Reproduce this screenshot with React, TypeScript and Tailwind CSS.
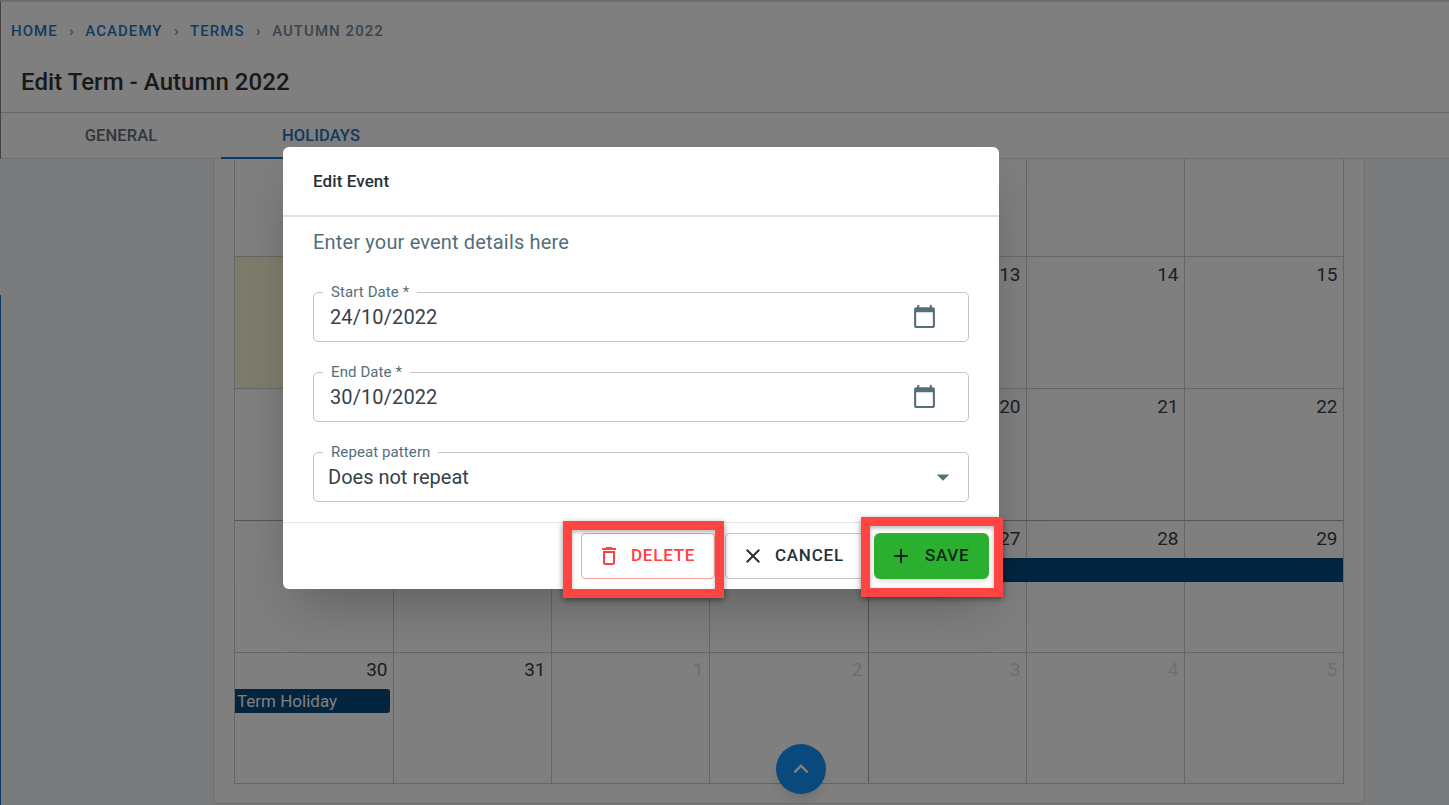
import React from 'react';

type Cell = { day: number; muted?: boolean; tint?: boolean; bar?: 'mid' | 'label'; strong?: boolean };

// days hidden behind the dialog are left out
const weeks: Cell[][] = [
  [{ day: 0 }, { day: 0 }, { day: 0 }, { day: 0 }, { day: 0, strong: true }, { day: 0 }, { day: 0 }],
  [{ day: 0, tint: true }, { day: 0 }, { day: 0 }, { day: 0 }, { day: 13, strong: true }, { day: 14 }, { day: 15 }],
  [{ day: 0 }, { day: 0 }, { day: 0 }, { day: 0 }, { day: 20, strong: true }, { day: 21 }, { day: 22 }],
  [{ day: 0 }, { day: 0 }, { day: 0 }, { day: 0 }, { day: 27, bar: 'mid', strong: true }, { day: 28, bar: 'mid' }, { day: 29, bar: 'mid' }],
  [
    { day: 30, bar: 'label' },
    { day: 31 },
    { day: 1, muted: true },
    { day: 2, muted: true },
    { day: 3, muted: true, strong: true },
    { day: 4, muted: true },
    { day: 5, muted: true },
  ],
];

const rowHeights = ['h-[98px]', 'h-[132px]', 'h-[132px]', 'h-[132px]', 'h-[130px]'];

const Crumb = ({ children, last }: { children: React.ReactNode; last?: boolean }) => (
  <span className={last ? 'text-[#74899c]' : 'text-[#2a74bd]'}>{children}</span>
);

const Sep = () => <span className="mx-[11.5px] text-[#6f7f8f] font-normal tracking-normal">›</span>;

const CalendarIcon = () => (
  <svg viewBox="0 0 24 24" className="w-[25px] h-[25px] fill-[#546e7a]">
    <path d="M20 3h-1V1h-2v2H7V1H5v2H4c-1.1 0-2 .9-2 2v16c0 1.1.9 2 2 2h16c1.1 0 2-.9 2-2V5c0-1.1-.9-2-2-2zm0 18H4V8h16v13z" />
  </svg>
);

const Field = ({ label, value, select }: { label: string; value: string; select?: boolean }) => (
  <div className="relative h-[50px] rounded-[5px] border border-[#c4c4c4] flex items-center justify-between">
    <span className="absolute -top-[9px] left-[9px] bg-white px-[8px] text-[15px] leading-[16px] tracking-[0.1px] text-[#546e7a]">
      {label}
    </span>
    <span className={`text-[20px] leading-[24px] text-[#37424a] ${select ? 'pl-[14px]' : 'pl-[16px] tracking-[0.1px]'}`}>{value}</span>
    {select ? (
      <svg viewBox="0 0 24 24" className="w-[30px] h-[30px] mr-[10px] fill-[#546e7a]">
        <path d="M7 10l5 5 5-5z" />
      </svg>
    ) : (
      <span className="mr-[31px] mb-[1px] flex">
        <CalendarIcon />
      </span>
    )}
  </div>
);

export default function App() {
  return (
    <div className="relative h-[805px] w-[1449px] overflow-hidden bg-[#f5f7fb] font-['Roboto',sans-serif]">
      {/* page behind the dialog */}
      <div className="bg-white border-t-2 border-[#d8d8d8] border-l border-l-[#888]">
        <div className="h-[58px] pl-[10px] pt-[19px] text-[15px] leading-[20px] font-medium tracking-[1.05px] uppercase">
          <Crumb>Home</Crumb>
          <Sep />
          <Crumb>Academy</Crumb>
          <Sep />
          <Crumb>Terms</Crumb>
          <Sep />
          <Crumb last>Autumn 2022</Crumb>
        </div>
        <div className="h-[53px] pl-[20px] pt-[5px] text-[24px] leading-[34px] font-medium tracking-[0.05px] text-[#333] border-b border-[#ccc]">
          Edit Term - Autumn 2022
        </div>
        <div className="flex h-[46px] pl-[20px] border-b border-[#ddd] text-[16.5px] font-medium tracking-[0.1px] uppercase">
          <div className="w-[200px] pt-[11px] text-center text-[#666f78]">General</div>
          <div className="w-[200px] pt-[11px] text-center text-[#2a74bd] border-b-2 border-[#1976d2] h-[46px]">Holidays</div>
        </div>
      </div>

      <div className="pl-[213px] pr-[84px]">
        <div className="h-[645px] bg-white border-x border-b border-[#dcdfe4] rounded-b-[6px] pl-[20px]">
          <div className="w-[1110px] border-r border-b border-[#ccc]">
            {weeks.map((week, w) => (
              <div key={w} className={`grid grid-cols-[159px_158px_158px_159px_158px_158px_159px] ${rowHeights[w]}`}>
                {week.map((cell, c) => (
                  <div
                    key={c}
                    className={`border-l ${w === 4 ? '' : 'border-b'} border-[#ccc] ${cell.strong ? 'border-l-[#aaa]' : ''} ${w === 2 ? 'border-b-[#aaa]' : ''} ${cell.tint ? 'bg-[#fdfbdb]' : ''}`}
                  >
                    {cell.day > 0 && (
                      <div className={`${w === 4 ? 'pt-[4px]' : 'pt-[5px]'} pr-[5.5px] text-right text-[19px] leading-[26px] ${cell.muted ? 'text-[#dcdcdc]' : 'text-[#3a4047]'}`}>
                        {cell.day}
                      </div>
                    )}
                    {cell.bar === 'label' && (
                      <div className="mt-[6px] mr-[3px] h-[24px] rounded-r-[3px] bg-[#04487e] pl-[2px] text-[17px] leading-[24px] text-white">Term Holiday</div>
                    )}
                    {cell.bar === 'mid' && <div className="mt-[6px] -ml-px h-[24px] bg-[#04487e]" />}
                  </div>
                ))}
              </div>
            ))}
          </div>
        </div>
      </div>

      <span className="absolute left-0 top-[295px] bottom-0 w-px bg-[#1976d2]" />

      <button className="absolute left-[776px] top-[744px] w-[50px] h-[50px] rounded-full bg-[#1593fc] shadow-lg flex items-center justify-center">
        <svg viewBox="0 0 24 24" className="w-[30px] h-[30px] fill-white">
          <path d="M12 8l-6 6 1.41 1.41L12 10.83l4.59 4.58L18 14z" />
        </svg>
      </button>

      {/* backdrop */}
      <div className="absolute inset-0 bg-black/50" />

      {/* dialog */}
      <div className="absolute left-[283px] top-[147px] w-[716px] h-[442px] bg-white rounded-[6px] shadow-2xl">
        <div className="h-[70px] pl-[30px] pt-[23px] border-b-2 border-[#e0e0e0] text-[17px] leading-[22px] font-medium tracking-[0.1px] text-[#263238]">
          Edit Event
        </div>
        <div className="px-[30px] h-[306px] border-b border-[#e6e6e6]">
          <div className="pt-[12px] h-[75px] text-[20px] leading-[26px] tracking-[0.17px] text-[#546e7a]">Enter your event details here</div>
          <div className="flex flex-col gap-[30px]">
            <Field label="Start Date *" value="24/10/2022" />
            <Field label="End Date *" value="30/10/2022" />
            <Field label="Repeat pattern" value="Does not repeat" select />
          </div>
        </div>
        <div className="flex justify-end gap-[10px] pt-[10px] pr-[10px] text-[17px] font-medium tracking-[0.75px] uppercase">
          <button className="w-[134px] h-[46px] rounded-[4px] border border-[#ffa3a3] text-[#ff4040] flex items-center pl-[15px] gap-[10px] uppercase">
            <svg viewBox="0 0 24 24" className="w-[24px] h-[24px] -mt-px fill-[#ff4040] shrink-0">
              <path d="M6 19c0 1.1.9 2 2 2h8c1.1 0 2-.9 2-2V7H6v12zM8 9h8v10H8V9zm7.5-5l-1-1h-5l-1 1H5v2h14V4z" />
            </svg>
            <span>Delete</span>
          </button>
          <button className="w-[139px] h-[46px] rounded-[4px] border border-[#c4c4c4] text-[#263238] flex items-center pl-[15px] gap-[10px] uppercase">
            <svg viewBox="0 0 24 24" className="w-[24px] h-[24px] -mt-px fill-[#263238] shrink-0">
              <path d="M19 6.41L17.59 5 12 10.59 6.41 5 5 6.41 10.59 12 5 17.59 6.41 19 12 13.41 17.59 19 19 17.59 13.41 12z" />
            </svg>
            <span>Cancel</span>
          </button>
          <button className="w-[115px] h-[46px] rounded-[6px] bg-[#2ab02e] text-[#10261a] shadow-md flex items-center pl-[15px] gap-[12px] uppercase">
            <svg viewBox="0 0 24 24" className="w-[24px] h-[24px] -mt-px fill-[#10261a] shrink-0">
              <path d="M19 13h-6v6h-2v-6H5v-2h6V5h2v6h6v2z" />
            </svg>
            <span>Save</span>
          </button>
        </div>
      </div>

      {/* highlight boxes from the annotated screenshot */}
      <div className="absolute left-[563px] top-[521px] w-[161px] h-[77px] border-[9px] border-[#ff4444] shadow-[0_2px_6px_rgba(0,0,0,0.45),inset_0_2px_4px_rgba(0,0,0,0.3)]" />
      <div className="absolute left-[861px] top-[517px] w-[142px] h-[80px] border-[9px] border-[#ff4444] shadow-[0_2px_6px_rgba(0,0,0,0.45),inset_0_2px_4px_rgba(0,0,0,0.3)]" />
    </div>
  );
}
